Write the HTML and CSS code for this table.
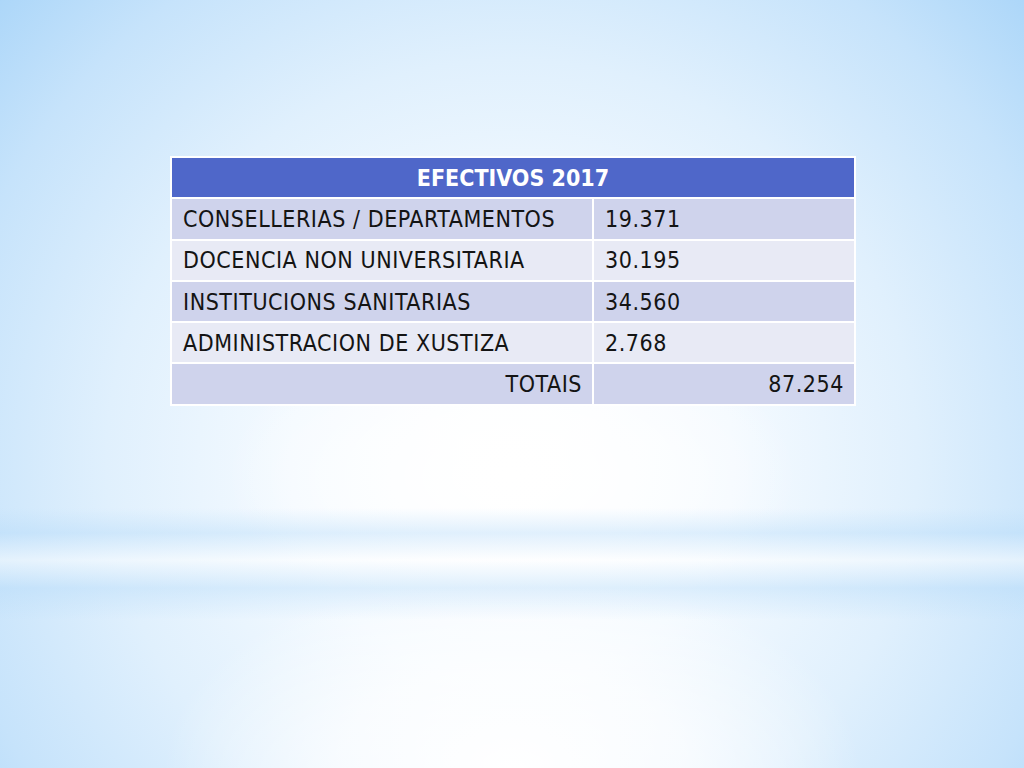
FILE: index.html
```html
<!DOCTYPE html>
<html lang="gl">
<head>
<meta charset="utf-8">
<title>Efectivos 2017</title>
<link rel="stylesheet" href="styles.css">
</head>
<body>
<div class="slide">
  <table class="data">
    <colgroup>
      <col class="col-label">
      <col class="col-num">
    </colgroup>
    <thead>
      <tr><th colspan="2">EFECTIVOS 2017</th></tr>
    </thead>
    <tbody>
      <tr class="odd"><td class="label">CONSELLERIAS / DEPARTAMENTOS</td><td class="num">19.371</td></tr>
      <tr class="even"><td class="label">DOCENCIA NON UNIVERSITARIA</td><td class="num">30.195</td></tr>
      <tr class="odd"><td class="label">INSTITUCIONS SANITARIAS</td><td class="num">34.560</td></tr>
      <tr class="even"><td class="label">ADMINISTRACION DE XUSTIZA</td><td class="num">2.768</td></tr>
      <tr class="odd total"><td class="label">TOTAIS</td><td class="num">87.254</td></tr>
    </tbody>
  </table>
</div>
</body>
</html>
```
FILE: styles.css
```css
html, body {
  margin: 0;
  padding: 0;
}
body {
  width: 1024px;
  height: 768px;
  overflow: hidden;
  font-family: "DejaVu Sans Condensed", "DejaVu Sans", sans-serif;
  background:
    linear-gradient(to bottom,
      rgba(255,255,255,0) 0px,
      rgba(255,255,255,0) 508px,
      rgba(180,218,249,0.4) 533px,
      rgba(255,255,255,0.45) 560px,
      rgba(180,218,249,0.4) 588px,
      rgba(255,255,255,0) 620px),
    radial-gradient(ellipse 34% 26% at 50% 100%,
      rgba(255,255,255,1) 0%, rgba(255,255,255,0.7) 50%, rgba(255,255,255,0) 100%),
    radial-gradient(ellipse 28% 20% at 50% 62%,
      rgba(255,255,255,1) 0%, rgba(255,255,255,0.6) 50%, rgba(255,255,255,0) 100%),
    radial-gradient(ellipse 72% 95% at 50% 60%,
      #ffffff 0%, #f4faff 30%, #e0f0fd 55%, #c6e3fb 78%, #a3d2f8 100%);
}
.slide {
  padding: 156px 0 0 170px;
}
.data {
  border-collapse: collapse;
  width: 684px;
  table-layout: fixed;
}
.col-label {
  width: 422px;
}
.col-num {
  width: 262px;
}
.data th,
.data td {
  border: 2px solid #ffffff;
  height: 39.3px;
  padding: 0;
  font-size: 23px;
  line-height: 26px;
  letter-spacing: 0.55px;
  color: #141414;
  white-space: nowrap;
}
.data th {
  background: #4f67c9;
  color: #ffffff;
  font-weight: bold;
  text-align: center;
  letter-spacing: 0;
}
.data td.label {
  padding-left: 11px;
}
.data td.num {
  padding-left: 11px;
}
.odd td {
  background: #cfd3ec;
}
.even td {
  background: #e8eaf5;
}
.total td.label,
.total td.num {
  text-align: right;
  padding-right: 10px;
}
```
